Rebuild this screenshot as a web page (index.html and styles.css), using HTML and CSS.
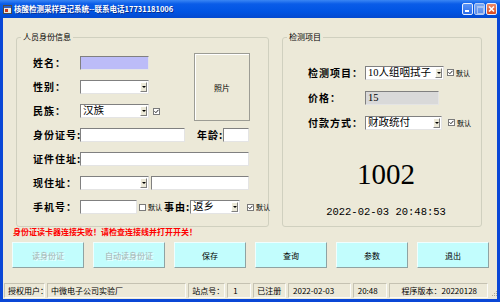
FILE: index.html
```html
<!DOCTYPE html>
<html lang="zh-CN">
  <head>
    <meta charset="UTF-8" />
    <title>核酸检测采样登记系统</title>
    <link rel="stylesheet" href="styles.css">
  </head>
  <body>
    <div class="window">
      <!-- Title bar -->
      <div class="titlebar">
        <svg class="app-icon" viewBox="0 0 9 9">
          <rect x="0.5" y="0.5" width="8" height="8" fill="#eceae0" stroke="#4a4a4a" />
          <rect x="1" y="1" width="7" height="2" fill="#2f5fc4" />
          <rect x="2" y="4" width="3" height="3" fill="#c83a1e" />
        </svg>
        <span class="title">核酸检测采样登记系统--联系电话17731181006</span>
        <div class="caption">
          <span class="cap-btn min"></span>
          <span class="cap-btn max"></span>
          <span class="cap-btn close">
            <svg viewBox="0 0 9 10"><path d="M2 2.5l5 5M7 2.5l-5 5" stroke="#fff" stroke-width="1.6" /></svg>
          </span>
        </div>
      </div>

      <div class="frame">
        <div class="client">
          <div class="groups">
            <!-- Left: person info -->
            <fieldset class="group person">
              <legend>人员身份信息</legend>
              <div class="body">
                <div class="top">
                  <div class="rows">
                    <div class="row">
                      <span class="lbl">姓名：</span>
                      <span class="box name w69"></span>
                    </div>
                    <div class="row">
                      <span class="lbl">性别：</span>
                      <span class="box combo w69"><span class="arrow"></span></span>
                    </div>
                    <div class="row">
                      <span class="lbl">民族：</span>
                      <span class="box combo w69">汉族<span class="arrow"></span></span>
                      <svg class="chk gap4" viewBox="0 0 7 7"><rect x="0.5" y="0.5" width="6" height="6" fill="#fff" stroke="#7a7a7a" /><path d="M1.5 3.3l1.4 1.4 2.6-2.9" fill="none" stroke="#222" /></svg>
                    </div>
                  </div>
                  <div class="photo">照片</div>
                </div>
                <div class="row">
                  <span class="lbl">身份证号:</span>
                  <span class="box w105"></span>
                  <span class="lbl age-lbl">年龄:</span>
                  <span class="box w26"></span>
                </div>
                <div class="row">
                  <span class="lbl">证件住址:</span>
                  <span class="box w169"></span>
                </div>
                <div class="row">
                  <span class="lbl">现住址：</span>
                  <span class="box combo w69"><span class="arrow"></span></span>
                  <span class="box w98 gap2"></span>
                </div>
                <div class="row">
                  <span class="lbl">手机号：</span>
                  <span class="box w57"></span>
                  <svg class="chk gap2" viewBox="0 0 7 7"><rect x="0.5" y="0.5" width="6" height="6" fill="#fff" stroke="#7a7a7a" /></svg>
                  <span class="small gap2">默认</span>
                  <span class="lbl reason-lbl">事由:</span>
                  <span class="box combo w50">返乡<span class="arrow"></span></span>
                  <svg class="chk gap7" viewBox="0 0 7 7"><rect x="0.5" y="0.5" width="6" height="6" fill="#fff" stroke="#7a7a7a" /><path d="M1.5 3.3l1.4 1.4 2.6-2.9" fill="none" stroke="#222" /></svg>
                  <span class="small gap2">默认</span>
                </div>
              </div>
            </fieldset>

            <!-- Right: test item -->
            <fieldset class="group test">
              <legend>检测项目</legend>
              <div class="rows">
                <div class="row tall">
                  <span class="lbl wide">检测项目：</span>
                  <span class="box combo w79">10人组咽拭子<span class="arrow"></span></span>
                  <svg class="chk gap3" viewBox="0 0 7 7"><rect x="0.5" y="0.5" width="6" height="6" fill="#fff" stroke="#7a7a7a" /><path d="M1.5 3.3l1.4 1.4 2.6-2.9" fill="none" stroke="#222" /></svg>
                  <span class="small gap2">默认</span>
                </div>
                <div class="row tall">
                  <span class="lbl wide">价格：</span>
                  <span class="box price w74">15</span>
                </div>
                <div class="row tall">
                  <span class="lbl wide">付款方式：</span>
                  <span class="box combo w77">财政统付<span class="arrow"></span></span>
                  <svg class="chk gap6" viewBox="0 0 7 7"><rect x="0.5" y="0.5" width="6" height="6" fill="#fff" stroke="#7a7a7a" /><path d="M1.5 3.3l1.4 1.4 2.6-2.9" fill="none" stroke="#222" /></svg>
                  <span class="small gap2">默认</span>
                </div>
              </div>
              <div class="readout">
                <div class="big-no">1002</div>
                <div class="clock">2022-02-03 20:48:53</div>
              </div>
            </fieldset>
          </div>

          <div class="error">身份证读卡器连接失败！请检查连接线并打开开关！</div>

          <div class="buttons">
            <div class="btn disabled">读身份证</div>
            <div class="btn disabled">自动读身份证</div>
            <div class="btn">保存</div>
            <div class="btn">查询</div>
            <div class="btn">参数</div>
            <div class="btn">退出</div>
          </div>
        </div>

        <!-- Status bar -->
        <div class="statusbar">
          <span class="panel p1">授权用户：</span>
          <span class="panel p2">中微电子公司实验厂</span>
          <span class="panel p3">站点号：</span>
          <span class="panel p4">1</span>
          <span class="panel p5">已注册</span>
          <span class="panel p6">2022-02-03</span>
          <span class="panel p7">20:48</span>
          <span class="panel p8">程序版本：20220128</span>
          <svg class="grip" viewBox="0 0 6 12">
            <path d="M5 5h1v1H5zM3 7h1v1H3zM5 7h1v1H5zM1 9h1v1H1zM3 9h1v1H3zM5 9h1v1H5z" fill="#a9a696" />
          </svg>
        </div>
      </div>
    </div>
  </body>
</html>
```

FILE: styles.css
```css
/* General */
* {
  box-sizing: border-box;
}

body {
  margin: 0;
  width: 500px;
  height: 302px;
  overflow: hidden;
  font-family: "Noto Sans CJK SC", sans-serif;
  font-size: 8px;
  color: #000;
}

.window {
  display: flex;
  flex-direction: column;
  width: 500px;
  height: 302px;
}

/* Title bar */
.titlebar {
  flex: none;
  height: 18px;
  display: flex;
  align-items: center;
  padding: 0 3px;
  background: linear-gradient(#3a86f4, #0a5ce8 22%, #0054e3 65%, #0349cf);
  color: #fff;
}

.app-icon {
  width: 9px;
  height: 9px;
  margin-right: 2px;
}

.title {
  font-size: 7.5px;
  font-weight: bold;
  line-height: 10px;
  text-shadow: 1px 1px #0a2f8e;
}

.caption {
  margin-left: auto;
  display: flex;
  gap: 1px;
}

.cap-btn {
  width: 11px;
  height: 12px;
  border: 1px solid #e8eefc;
  border-radius: 2px;
  background: linear-gradient(#5a94f6, #2a6cea);
  position: relative;
}

.cap-btn.min::after {
  content: "";
  position: absolute;
  left: 2px;
  bottom: 2px;
  width: 4px;
  height: 2px;
  background: #fff;
}

.cap-btn.max {
  background: linear-gradient(#7ba9f3, #5a8ceb);
  border-color: #b8cdf4;
}

.cap-btn.max::after {
  content: "";
  position: absolute;
  left: 2px;
  top: 2px;
  width: 5px;
  height: 5px;
  border: 1px solid #a9c3f1;
  border-top-width: 2px;
}

.cap-btn.close {
  background: linear-gradient(#ec8a68, #d9481e);
}

.cap-btn.close svg {
  display: block;
  width: 9px;
  height: 10px;
}

/* Window frame */
.frame {
  flex: 1;
  display: flex;
  flex-direction: column;
  border: 3px solid #0a47d6;
  border-top: 0;
}

.client {
  flex: 1;
  background: #ece9d8;
  padding: 13px 0 0 9px;
}

.groups {
  display: flex;
  gap: 13px;
  margin-left: 4px;
}

/* Group boxes */
.group {
  margin: 0;
  padding: 0;
  min-width: 0;
  height: 196px;
  border: 1px solid #d0d0bf;
  border-radius: 3px;
}

.group legend {
  font-size: 8px;
  line-height: 12px;
  padding: 0 2px;
  margin-left: 4px;
}

.person {
  width: 253px;
}

.test {
  width: 200px;
}

.person .body {
  padding: 8px 0 0 16px;
}

.top {
  display: flex;
}

.top .rows {
  width: 161px;
}

.photo {
  width: 56px;
  height: 68px;
  margin-top: 2px;
  display: flex;
  align-items: center;
  justify-content: center;
  border: 1px solid #9c9c94;
  box-shadow: inset 1px 1px #fff;
  font-size: 8px;
}

.row {
  display: flex;
  align-items: center;
  height: 24px;
  white-space: nowrap;
}

.row.tall {
  height: 25px;
}

.lbl {
  flex: none;
  width: 47px;
  font-size: 10px;
  font-weight: bold;
  letter-spacing: 1px;
  line-height: 14px;
}

.lbl.wide {
  width: 57px;
}

.age-lbl {
  width: 26px;
  margin-left: 12px;
}

.reason-lbl {
  width: 26px;
  margin-left: 2px;
}

/* Text boxes and combo boxes */
.box {
  flex: none;
  height: 14px;
  display: flex;
  align-items: center;
  padding-left: 2px;
  background: #fff;
  border: 1px solid;
  border-color: #808080 #e4e4e4 #e4e4e4 #808080;
  font-family: "Liberation Serif", "Noto Sans CJK SC", serif;
  font-size: 10.5px;
  line-height: 12px;
  overflow: hidden;
}

.box.name {
  background: #bcbcf8;
}

.box.price {
  background: #d9d9d9;
}

.arrow {
  flex: none;
  width: 7px;
  height: 10px;
  margin: 0 1px 0 auto;
  display: flex;
  align-items: center;
  justify-content: center;
  background: #ece9d8;
  border: 1px solid;
  border-color: #fff #808080 #808080 #fff;
}

.arrow::after {
  content: "";
  border-left: 2px solid transparent;
  border-right: 2px solid transparent;
  border-top: 2px solid #000;
}

.w26 { width: 26px; }
.w50 { width: 50px; }
.w57 { width: 57px; }
.w69 { width: 69px; }
.w74 { width: 74px; }
.w77 { width: 77px; }
.w79 { width: 79px; }
.w98 { width: 98px; }
.w105 { width: 105px; }
.w169 { width: 169px; }

.gap2 { margin-left: 2px; }
.gap3 { margin-left: 3px; }
.gap4 { margin-left: 4px; }
.gap6 { margin-left: 6px; }
.gap7 { margin-left: 7px; }

.chk {
  flex: none;
  width: 7px;
  height: 7px;
}

.small {
  font-size: 7px;
  line-height: 10px;
}

/* Right group */
.test .rows {
  padding: 17px 0 0 25px;
}

.readout {
  padding-left: 8px;
  text-align: center;
}

.big-no {
  margin-top: 22px;
  font-family: "Liberation Serif", serif;
  font-size: 29px;
  line-height: 34px;
}

.clock {
  margin-top: 14px;
  font-family: "Liberation Mono", monospace;
  font-size: 10.5px;
  line-height: 14px;
}

/* Error + buttons */
.error {
  margin-left: 1px;
  color: #f00;
  font-size: 8px;
  font-weight: bold;
  line-height: 10px;
}

.buttons {
  display: flex;
  gap: 9px;
  margin-top: 5px;
}

.btn {
  width: 72px;
  height: 26px;
  display: flex;
  align-items: center;
  justify-content: center;
  background: #c2fdfd;
  border: 1px solid;
  border-color: #effefe #8fa3a3 #8fa3a3 #effefe;
  font-size: 8px;
}

.btn.disabled {
  color: #a4b0b0;
  text-shadow: 1px 1px #f2ffff;
}

/* Status bar */
.statusbar {
  flex: none;
  height: 18px;
  display: flex;
  gap: 2px;
  padding: 2px 0 1px 1px;
  background: #ece9d8;
}

.panel {
  display: flex;
  align-items: center;
  padding-left: 3px;
  border: 1px solid;
  border-color: #c5c2b2 #fbfbf8 #fbfbf8 #c5c2b2;
  font-size: 8px;
  white-space: nowrap;
}

.p1 { width: 41px; }
.p2 { width: 140px; }
.p3 { width: 37px; }
.p4 { width: 24px; padding-left: 5px; }
.p5 { width: 33px; }
.p6 { width: 63px; padding-left: 4px; }
.p7 { width: 34px; padding-left: 4px; }
.p8 { width: 100px; justify-content: center; padding-left: 2px; }

.grip {
  width: 6px;
  height: 12px;
  margin-left: 1px;
  align-self: flex-end;
}
```
